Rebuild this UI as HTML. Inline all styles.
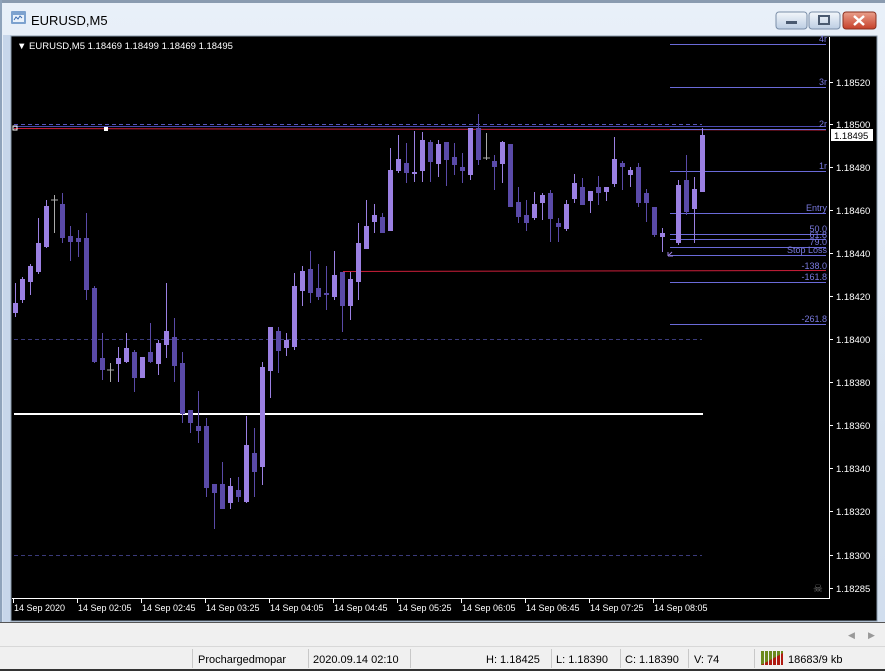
<!DOCTYPE html>
<html><head><meta charset="utf-8"><style>
html,body{margin:0;padding:0;width:885px;height:671px;overflow:hidden;background:#dce6f2}
svg{display:block}
text{font-family:"Liberation Sans",sans-serif}
</style></head><body>
<svg width="885" height="671" viewBox="0 0 885 671" xmlns="http://www.w3.org/2000/svg">
<defs>
<linearGradient id="tb" x1="0" y1="0" x2="0" y2="1"><stop offset="0" stop-color="#e9f0f9"/><stop offset="1" stop-color="#cfdced"/></linearGradient>
<linearGradient id="bt" x1="0" y1="0" x2="0" y2="1"><stop offset="0" stop-color="#f3f7fb"/><stop offset="1" stop-color="#bccde3"/></linearGradient>
<linearGradient id="cl" x1="0" y1="0" x2="0" y2="1"><stop offset="0" stop-color="#e9a08c"/><stop offset="1" stop-color="#c6402a"/></linearGradient>
</defs>
<rect width="885" height="671" fill="url(#tb)"/>
<rect x="0" y="0" width="885" height="3" fill="#8a9bb0"/>
<rect x="0" y="0" width="2" height="640" fill="#8fa3bb"/>
<rect x="3" y="35" width="8" height="590" fill="#c7d6ea"/>
<!-- title -->
<rect x="11" y="11" width="15" height="13" fill="#7da2cf" rx="1"/>
<rect x="13" y="15" width="11" height="7" fill="#eaf2fb"/>
<path d="M14 20 l2-3 2 2 2-3 2 2" stroke="#3b6cb0" fill="none"/>
<text x="31" y="25" font-size="13" fill="#000">EURUSD,M5</text>
<!-- buttons -->
<rect x="776" y="12" width="31" height="17" rx="3" fill="url(#bt)" stroke="#7a8ea8"/>
<rect x="786" y="21" width="11" height="3" fill="#4a5a70"/>
<rect x="809" y="12" width="31" height="17" rx="3" fill="url(#bt)" stroke="#7a8ea8"/>
<rect x="819" y="16" width="10" height="8" fill="none" stroke="#4a5a70" stroke-width="2"/>
<rect x="843" y="12" width="33" height="17" rx="3" fill="url(#cl)" stroke="#8a3020"/>
<path d="M854 16 l10 9 M864 16 l-10 9" stroke="#fff" stroke-width="2.5"/>
<!-- chart -->
<rect x="11" y="36" width="866" height="585" fill="#000" stroke="#8899aa"/>
<line x1="829.5" y1="37" x2="829.5" y2="598" stroke="#fff"/>
<line x1="12" y1="598.5" x2="830" y2="598.5" stroke="#fff"/>
<text x="17" y="49" font-size="9.5" fill="#fff">▼ EURUSD,M5  1.18469 1.18499 1.18469 1.18495</text>
<!-- grid / lines -->
<g stroke="#3a3a7a" stroke-dasharray="4,3">
<line x1="14" y1="124.5" x2="702" y2="124.5" stroke="#5555bb"/>
<line x1="14" y1="339.5" x2="702" y2="339.5"/>
<line x1="14" y1="555.5" x2="702" y2="555.5"/>
</g>
<line x1="14" y1="126.5" x2="826" y2="126.5" stroke="#4b4bb0"/>
<line x1="14" y1="128.5" x2="826" y2="130" stroke="#cc1f3a"/>
<rect x="104" y="127" width="4" height="4" fill="#fff"/>
<rect x="13" y="126" width="4" height="4" fill="none" stroke="#fff"/>
<line x1="343" y1="271.5" x2="826" y2="270.5" stroke="#cc1f3a"/>
<line x1="14" y1="414" x2="703" y2="414" stroke="#fff" stroke-width="2"/>
<!-- fib -->
<g stroke="#6a6ad8">
<line x1="670" y1="44.5" x2="826" y2="44.5"/>
<line x1="670" y1="87.5" x2="826" y2="87.5"/>
<line x1="670" y1="129.5" x2="826" y2="129.5"/>
<line x1="670" y1="171.5" x2="826" y2="171.5"/>
<line x1="670" y1="213.5" x2="826" y2="213.5"/>
<line x1="670" y1="234.5" x2="826" y2="234.5"/>
<line x1="670" y1="239.5" x2="826" y2="239.5"/>
<line x1="670" y1="247.5" x2="826" y2="247.5"/>
<line x1="670" y1="255.5" x2="826" y2="255.5"/>
<line x1="670" y1="282.5" x2="826" y2="282.5"/>
<line x1="670" y1="324.5" x2="826" y2="324.5"/>
</g>
<g font-size="9" fill="#7a7ae0" text-anchor="end">
<text x="827" y="42">4r</text><text x="827" y="85">3r</text><text x="827" y="127">2r</text>
<text x="827" y="169">1r</text><text x="827" y="211">Entry</text><text x="827" y="232">50.0</text>
<text x="827" y="238">61.8</text><text x="827" y="245">79.0</text><text x="827" y="253">Stop Loss</text>
<text x="827" y="269">-138.0</text><text x="827" y="280">-161.8</text><text x="827" y="322">-261.8</text>
</g>
<!-- candles -->
<path stroke="#9b80e2" fill="none" d="M15.5 283V317M22.5 277V303M30.5 264V295M38.5 218V274M46.5 200V248M118.5 347V382M126.5 333V363M142.5 357V378M158.5 340V375M166.5 283V358M230.5 478V509M246.5 416V503M262.5 362V485M270.5 327V398M286.5 333V356M294.5 273V350M302.5 266V306M334.5 251V300M350.5 272V320M358.5 223V300M366.5 200V249M374.5 204V233M390.5 148V231M398.5 135V173M414.5 131V182M422.5 132V182M438.5 140V177M470.5 128V180M502.5 141V183M534.5 192V220M542.5 193V220M566.5 200V231M574.5 174V203M590.5 191V213M606.5 187V201M614.5 137V187M630.5 167V187M662.5 228V252M678.5 180V245M694.5 177V243M702.5 128V192"/>
<path fill="#9b80e2" d="M13 303h5v10h-5zM20 279h5v21h-5zM28 266h5v16h-5zM36 243h5v29h-5zM44 206h5v41h-5zM116 358h5v6h-5zM124 348h5v14h-5zM140 357h5v21h-5zM156 343h5v21h-5zM164 331h5v14h-5zM228 486h5v17h-5zM244 445h5v57h-5zM260 367h5v100h-5zM268 327h5v44h-5zM284 340h5v8h-5zM292 286h5v61h-5zM300 271h5v20h-5zM332 275h5v22h-5zM348 279h5v27h-5zM356 243h5v39h-5zM364 226h5v23h-5zM372 215h5v7h-5zM388 170h5v61h-5zM396 159h5v12h-5zM412 172h5v2h-5zM420 140h5v31h-5zM436 144h5v20h-5zM468 128h5v47h-5zM500 142h5v22h-5zM532 204h5v14h-5zM540 195h5v8h-5zM564 204h5v25h-5zM572 183h5v16h-5zM588 191h5v10h-5zM604 187h5v5h-5zM612 159h5v25h-5zM628 170h5v5h-5zM660 233h5v4h-5zM676 185h5v58h-5zM692 189h5v20h-5zM700 135h5v57h-5z"/>
<path stroke="#5a4aa8" fill="none" d="M62.5 193V243M70.5 226V261M78.5 230V257M86.5 213V300M94.5 286V363M102.5 333V380M134.5 350V392M150.5 323V363M174.5 318V382M182.5 352V423M190.5 410V433M198.5 391V443M206.5 418V497M214.5 484V529M222.5 462V509M238.5 477V502M254.5 428V497M278.5 327V373M310.5 251V303M318.5 264V300M326.5 266V310M342.5 272V332M382.5 213V233M406.5 143V183M430.5 140V182M446.5 142V186M454.5 143V175M462.5 153V183M478.5 114V165M494.5 155V190M510.5 144V207M518.5 187V223M526.5 200V231M550.5 190V242M558.5 218V242M582.5 178V205M598.5 176V205M622.5 161V190M638.5 163V207M646.5 189V222M654.5 207V237M686.5 155V215"/>
<path fill="#5a4aa8" d="M60 204h5v34h-5zM68 236h5v6h-5zM76 238h5v4h-5zM84 238h5v52h-5zM92 288h5v74h-5zM100 358h5v12h-5zM132 352h5v26h-5zM148 352h5v10h-5zM172 337h5v29h-5zM180 363h5v51h-5zM188 410h5v13h-5zM196 426h5v5h-5zM204 426h5v62h-5zM212 484h5v9h-5zM220 484h5v25h-5zM236 490h5v7h-5zM252 453h5v19h-5zM276 331h5v20h-5zM308 269h5v24h-5zM316 288h5v9h-5zM324 293h5v2h-5zM340 272h5v34h-5zM380 217h5v16h-5zM404 163h5v10h-5zM428 142h5v20h-5zM444 142h5v18h-5zM452 157h5v8h-5zM460 167h5v4h-5zM476 128h5v32h-5zM492 161h5v6h-5zM508 144h5v63h-5zM516 202h5v15h-5zM524 215h5v8h-5zM548 193h5v26h-5zM556 223h5v4h-5zM580 187h5v18h-5zM596 187h5v6h-5zM620 163h5v4h-5zM636 167h5v36h-5zM644 193h5v10h-5zM652 207h5v28h-5zM684 180h5v32h-5z"/>
<path stroke="#aaaaaa" d="M54.5 195V233M51 200h7M110.5 363V382M107 370h7M486.5 133V160M483 158h7"/>
<path stroke="#9b80e2" fill="none" d="M668 256l4-4M668 256h5M668 256v-4"/>
<!-- price axis -->
<g stroke="#fff"><path d="M829 82.5h4M829 124.5h4M829 167.5h4M829 210.5h4M829 253.5h4M829 296.5h4M829 339.5h4M829 382.5h4M829 425.5h4M829 468.5h4M829 511.5h4M829 555.5h4M829 588.5h4"/></g>
<g font-size="9.5" fill="#fff">
<text x="836" y="86">1.18520</text><text x="836" y="128">1.18500</text><text x="836" y="171">1.18480</text>
<text x="836" y="214">1.18460</text><text x="836" y="257">1.18440</text><text x="836" y="300">1.18420</text>
<text x="836" y="343">1.18400</text><text x="836" y="386">1.18380</text><text x="836" y="429">1.18360</text>
<text x="836" y="472">1.18340</text><text x="836" y="515">1.18320</text><text x="836" y="559">1.18300</text>
<text x="836" y="592">1.18285</text>
</g>
<rect x="831" y="129" width="42" height="12" fill="#fff"/>
<text x="834" y="139" font-size="9.5" fill="#000">1.18495</text>
<text x="813" y="592" font-size="11" fill="#777">☠</text>
<!-- time axis -->
<g stroke="#fff"><path d="M13.5 598v5M77.5 598v5M141.5 598v5M205.5 598v5M269.5 598v5M333.5 598v5M397.5 598v5M461.5 598v5M525.5 598v5M589.5 598v5M653.5 598v5"/></g>
<g font-size="9" fill="#fff">
<text x="14" y="611">14 Sep 2020</text><text x="78" y="611">14 Sep 02:05</text><text x="142" y="611">14 Sep 02:45</text>
<text x="206" y="611">14 Sep 03:25</text><text x="270" y="611">14 Sep 04:05</text><text x="334" y="611">14 Sep 04:45</text>
<text x="398" y="611">14 Sep 05:25</text><text x="462" y="611">14 Sep 06:05</text><text x="526" y="611">14 Sep 06:45</text>
<text x="590" y="611">14 Sep 07:25</text><text x="654" y="611">14 Sep 08:05</text>
</g>
<!-- lower bars -->
<rect x="0" y="622" width="885" height="24" fill="#f0f0f0"/>
<line x1="0" y1="622.5" x2="885" y2="622.5" stroke="#555"/>
<text x="848" y="638" font-size="9" fill="#999">◀</text><text x="868" y="638" font-size="9" fill="#999">▶</text>
<rect x="0" y="646" width="885" height="23" fill="#f0f0f0"/>
<line x1="0" y1="646.5" x2="885" y2="646.5" stroke="#d8d8d8"/>
<rect x="0" y="669" width="885" height="2" fill="#333"/>
<g stroke="#c8c8c8"><path d="M192.5 649v19M308.5 649v19M410.5 649v19M551.5 649v19M620.5 649v19M688.5 649v19M754.5 649v19"/></g>
<g font-size="11" fill="#000">
<text x="198" y="663">Prochargedmopar</text><text x="313" y="663">2020.09.14 02:10</text>
<text x="486" y="663">H: 1.18425</text><text x="556" y="663">L: 1.18390</text><text x="625" y="663">C: 1.18390</text>
<text x="694" y="663">V: 74</text><text x="788" y="663">18683/9 kb</text>
</g>
<rect x="761" y="651" width="22" height="14" fill="#6b8a1c"/>
<path d="M761 665l22-12v12z" fill="#b01a10"/>
<g stroke="#f0f0f0"><path d="M764.5 651v14M768.5 651v14M772.5 651v14M776.5 651v14M780.5 651v14"/></g>
</svg>
</body></html>
